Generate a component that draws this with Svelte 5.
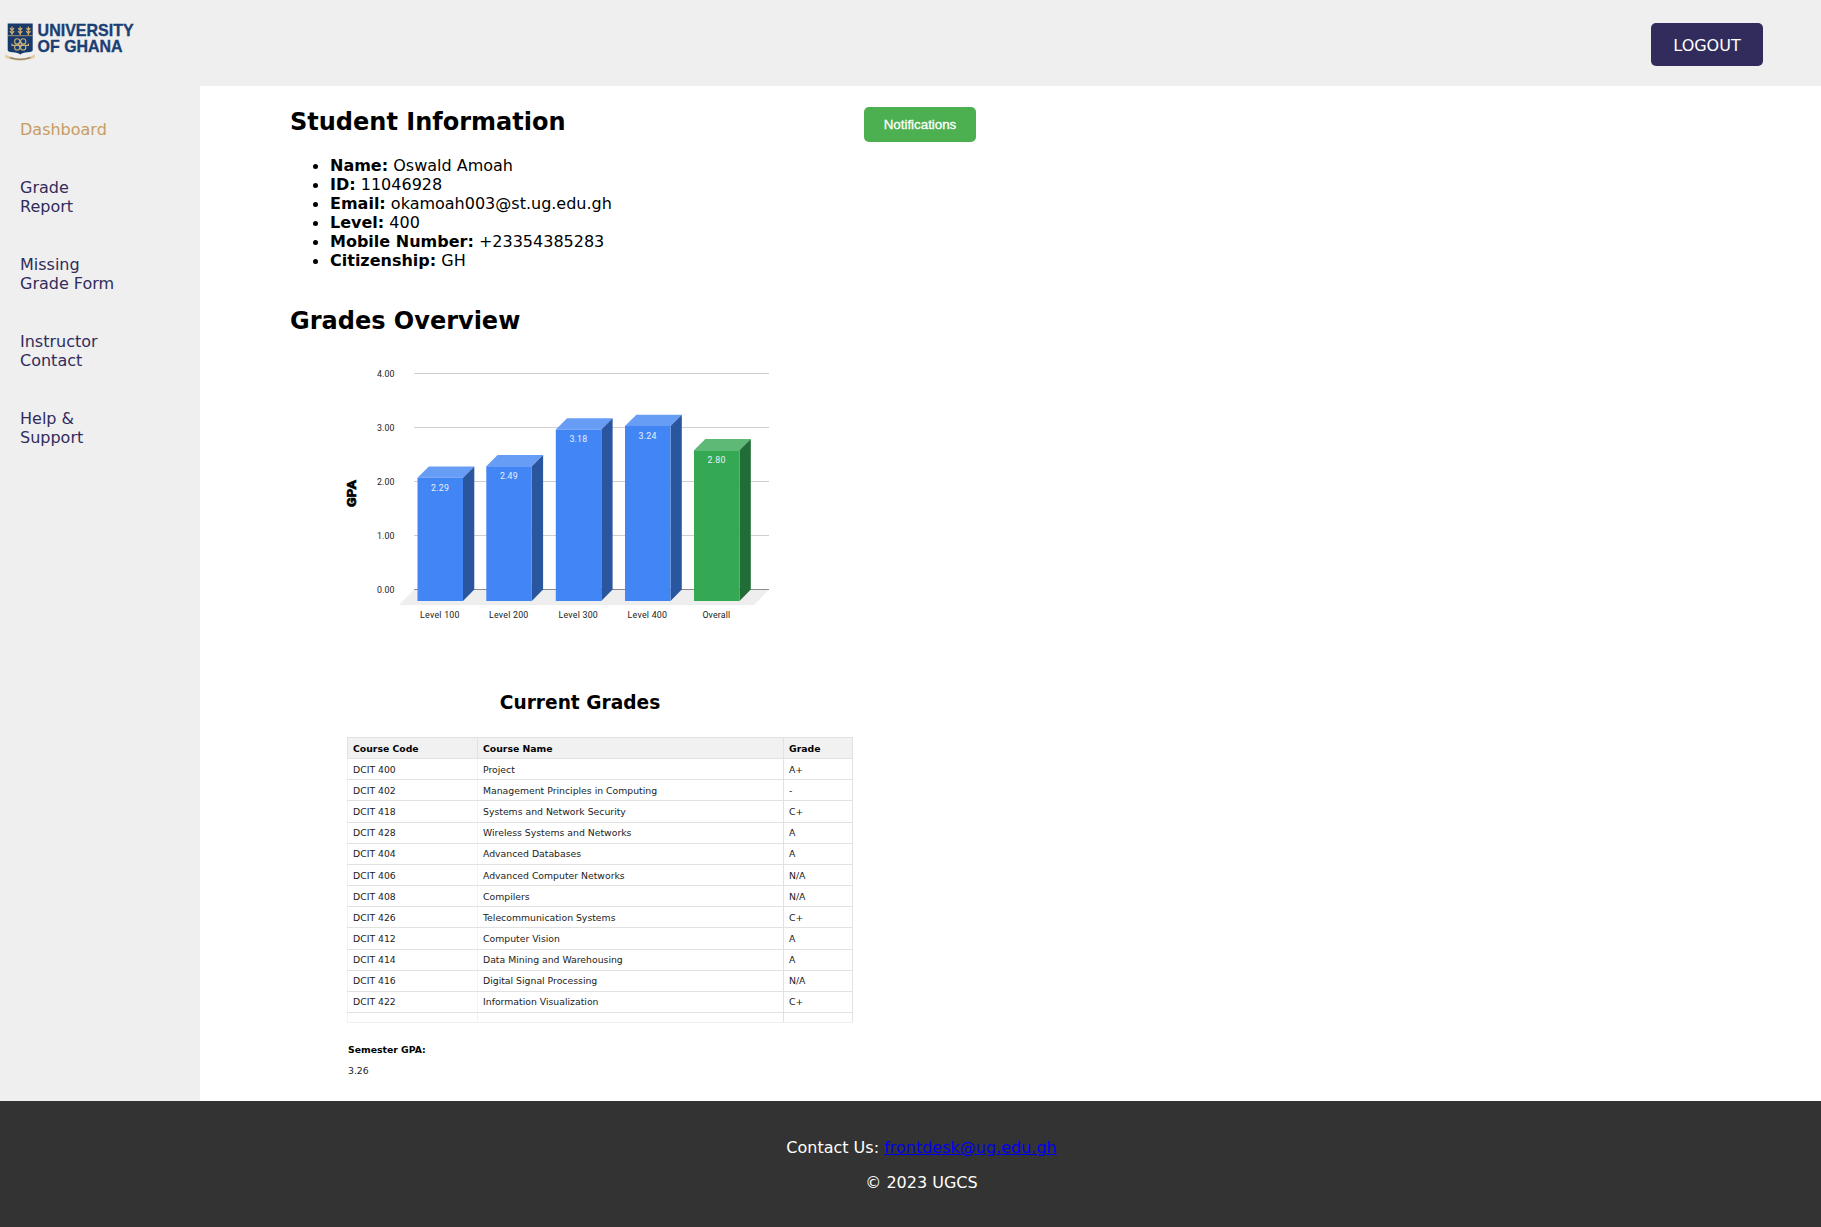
<script>
  const nav = [
    ['Dashboard'],
    ['Grade', 'Report'],
    ['Missing', 'Grade Form'],
    ['Instructor', 'Contact'],
    ['Help &', 'Support']
  ];

  const info = [
    ['Name:', 'Oswald Amoah'],
    ['ID:', '11046928'],
    ['Email:', 'okamoah003@st.ug.edu.gh'],
    ['Level:', '400'],
    ['Mobile Number:', '+23354385283'],
    ['Citizenship:', 'GH']
  ];

  const ticks = ['4.00', '3.00', '2.00', '1.00', '0.00'];

  const bars = [
    { label: 'Level 100', value: '2.29', x: 87.5, top: 127.7, w: 39.4 },
    { label: 'Level 200', value: '2.49', x: 156.3, top: 116.3, w: 39.4 },
    { label: 'Level 300', value: '3.18', x: 225.8, top: 79.6, w: 39.4 },
    { label: 'Level 400', value: '3.24', x: 295, top: 76, w: 39.4 },
    { label: 'Overall', value: '2.80', x: 364, top: 100.2, w: 27.8, green: true }
  ];

  const courses = [
    ['DCIT 400', 'Project', 'A+'],
    ['DCIT 402', 'Management Principles in Computing', '-'],
    ['DCIT 418', 'Systems and Network Security', 'C+'],
    ['DCIT 428', 'Wireless Systems and Networks', 'A'],
    ['DCIT 404', 'Advanced Databases', 'A'],
    ['DCIT 406', 'Advanced Computer Networks', 'N/A'],
    ['DCIT 408', 'Compilers', 'N/A'],
    ['DCIT 426', 'Telecommunication Systems', 'C+'],
    ['DCIT 412', 'Computer Vision', 'A'],
    ['DCIT 414', 'Data Mining and Warehousing', 'A'],
    ['DCIT 416', 'Digital Signal Processing', 'N/A'],
    ['DCIT 422', 'Information Visualization', 'C+']
  ];
</script>

<div class="page">
  <header>
    <svg class="logo" width="150" height="86" viewBox="0 0 150 86" role="img" aria-label="University of Ghana">
      <path d="M7.7 23.5H32.7V50Q32.7 52 28 52.3Q22 52.6 20.2 54.6Q18.4 52.6 12.4 52.3Q7.7 52 7.7 50Z" fill="#183a6b" />
      <path d="M7.7 35.7H32.7" stroke="#c5a46a" stroke-width="0.8" />
      {#each [12, 20.2, 28.4] as x}
        <g transform="translate({x} 0)" fill="none" stroke="#d0ad6c">
          <path d="M0 26.5V35" stroke-width="1.2" />
          <path d="M-2 28.2L0 30L2 28.2M-2.2 31.2L0 33L2.2 31.2" stroke-width="1.4" />
        </g>
      {/each}
      <g fill="none" stroke="#c9b07c" stroke-width="1.1">
        <circle cx="17.2" cy="41.4" r="2.6" />
        <circle cx="23.2" cy="41.4" r="2.6" />
        <circle cx="17.2" cy="47.4" r="2.6" />
        <circle cx="23.2" cy="47.4" r="2.6" />
        <circle cx="20.2" cy="44.4" r="1.8" />
        <path d="M12 43.4V45.4H28.4V43.4" />
      </g>
      <path d="M5.3 54.5L9.5 56.2Q20.2 60.6 30.9 56.2L35 54.5L34.5 58L30.5 59Q20.2 62.5 9.5 59L5.6 58Z" fill="#dfcaa2" />
      <path d="M10 57.6Q20.2 61 30.5 57.6" fill="none" stroke="#8d7d62" stroke-width="1.3" />
      <g class="wordmark">
        <text x="37.6" y="35.8" textLength="96" lengthAdjust="spacingAndGlyphs">UNIVERSITY</text>
        <text x="37.6" y="51.5" textLength="85" lengthAdjust="spacingAndGlyphs">OF GHANA</text>
      </g>
    </svg>
    <button class="logout">LOGOUT</button>
  </header>

  <div class="body">
    <nav>
      {#each nav as lines, i}
        <a class:active={i === 0} href="#{i}">
          {#each lines as line}<span>{line}</span>{/each}
        </a>
      {/each}
    </nav>

    <main>
      <section class="left">
        <h2>Student Information</h2>
        <ul>
          {#each info as [key, value]}
            <li><strong>{key}</strong> {value}</li>
          {/each}
        </ul>

        <h2 class="overview">Grades Overview</h2>
        <svg class="chart" width="460" height="290" viewBox="0 0 460 290">
          <path d="M84 239.5H439L424 255H69Z" fill="#eeeeee" />
          {#each ticks as tick, i}
            <path d="M84 {23.5 + i * 54}H439" stroke={i === 4 ? '#8c8c8c' : '#cfcfcf'} />
            <text class="tick" x="47" y={26.7 + i * 54} textLength="17.5">{tick}</text>
          {/each}
          <text class="axis" transform="translate(26 157) rotate(-90)" textLength="27" lengthAdjust="spacingAndGlyphs">GPA</text>
          {#each bars as b}
            <g class:green={b.green}>
              <path class="lid" d="M{b.x} {b.top}l11.3 -11.3h45.5l-11.3 11.3z" />
              <path class="side" d="M{b.x + 45.5} {b.top}l11.3 -11.3V239.6l-11.3 11.3z" />
              <path class="front" d="M{b.x} {b.top}h45.5V250.9h-45.5z" />
            </g>
            <text class="value" x={b.x + 13.6} y={b.top + 12.8} textLength="17.8">{b.value}</text>
            <text class="tick" x={b.x + 22.3 - b.w / 2} y="267.6" textLength={b.w}>{b.label}</text>
          {/each}
        </svg>

        <div class="grades">
          <h3>Current Grades</h3>
          <table>
            <thead>
              <tr><th>Course Code</th><th>Course Name</th><th>Grade</th></tr>
            </thead>
            <tbody>
              {#each courses as row}
                <tr>{#each row as cell}<td>{cell}</td>{/each}</tr>
              {/each}
              <tr class="empty"><td></td><td></td><td></td></tr>
            </tbody>
          </table>
          <p class="gpa"><strong>Semester GPA:</strong></p>
          <p class="gpa-value">3.26</p>
        </div>
      </section>
      <button class="notify">Notifications</button>
    </main>
  </div>

  <footer>
    <p>Contact Us: <a href="mailto:frontdesk@ug.edu.gh">frontdesk@ug.edu.gh</a></p>
    <p>© 2023 UGCS</p>
  </footer>
</div>

<style>
  :global(body) {
    margin: 0;
    background: #fff;
  }
  .page {
    display: flex;
    flex-direction: column;
    height: 1227px;
    overflow: hidden;
    font: 16px/19px 'DejaVu Sans', sans-serif;
    color: #000;
  }
  header {
    display: flex;
    justify-content: space-between;
    align-items: flex-start;
    flex: none;
    height: 86px;
    background: #efefef;
  }
  .wordmark {
    font: bold 17px 'Liberation Sans', sans-serif;
    fill: #1b3f73;
    stroke: #1b3f73;
    stroke-width: 0.35px;
  }
  button {
    border: 0;
    padding: 0;
    border-radius: 5px;
    color: #fff;
  }
  .logout {
    width: 112px;
    height: 43px;
    margin: 23px 58px 0 0;
    padding-top: 1px;
    background: #312c5b;
    font: inherit;
  }
  .body {
    display: flex;
    flex: none;
    height: 1015px;
  }
  nav {
    box-sizing: border-box;
    display: flex;
    flex-direction: column;
    gap: 39px;
    flex: none;
    width: 200px;
    padding: 34px 20px;
    background: #efefef;
  }
  nav a {
    display: flex;
    flex-direction: column;
    color: #312c5b;
    text-decoration: none;
  }
  nav a.active {
    color: #c69d62;
  }
  main {
    display: flex;
    align-items: flex-start;
    padding: 21px 0 0 90px;
  }
  .left {
    width: 574px;
  }
  h2 {
    margin: 0;
    padding-top: 1px;
    font-size: 24px;
    line-height: 28px;
  }
  ul {
    margin: 20px 0 36px;
    padding-left: 40px;
    list-style: none;
  }
  li::before {
    content: '';
    display: inline-block;
    width: 5px;
    height: 5px;
    margin: 0 12px 0 -17px;
    border-radius: 50%;
    background: #000;
    vertical-align: 2px;
  }
  .chart {
    display: block;
    margin: 15px 0 0 40px;
  }
  .tick,
  .value {
    font: 8.8px Roboto, sans-serif;
    fill: #222;
  }
  .value {
    fill: #e8f0fe;
  }
  .axis {
    font: 900 12.6px Roboto, sans-serif;
    stroke: #000;
    stroke-width: 0.5px;
  }
  .lid { fill: #689df6; }
  .side { fill: #2a56a0; }
  .front { fill: #4285f4; }
  .green .lid { fill: #5db975; }
  .green .side { fill: #226d37; }
  .green .front { fill: #34a853; }
  .grades {
    width: 506px;
    margin: 50px 0 0 57px;
    font-size: 9.3px;
    line-height: 12px;
  }
  h3 {
    width: 466px;
    margin: 0 0 22px;
    padding-top: 1px;
    text-align: center;
    font-size: 18.6px;
    line-height: 24px;
  }
  table {
    width: 506px;
    border-collapse: collapse;
    table-layout: fixed;
    color: #222;
  }
  th,
  td {
    box-sizing: border-box;
    height: 21.17px;
    padding: 1px 5px 0;
    border: 1px solid #e2e2e2;
    text-align: left;
  }
  th {
    background: #f1f1f1;
    color: #000;
  }
  td:nth-child(1) {
    border-left-color: #f3f3f3;
    border-right-color: #f3f3f3;
  }
  td:nth-child(2) {
    border-left-color: #f3f3f3;
  }
  th:nth-child(1) { width: 130px; }
  th:nth-child(2) { width: 306px; }
  .empty td {
    height: 10px;
    border-bottom-color: #f0f0f0;
  }
  p {
    margin: 0;
  }
  .gpa {
    margin: 21px 0 0 1px;
  }
  .gpa-value {
    margin: 9px 0 0 1px;
    color: #222;
  }
  .notify {
    width: 112px;
    height: 35px;
    background: #4caf50;
    font: 13.333px 'Liberation Sans', sans-serif;
    -webkit-text-stroke: 0.3px #fff;
  }
  footer {
    box-sizing: border-box;
    display: flex;
    flex-direction: column;
    gap: 16px;
    flex: none;
    height: 126px;
    padding: 37px 0 0 22px;
    background: #333;
    color: #fff;
    text-align: center;
  }
  footer a {
    color: #0000ee;
  }
</style>
